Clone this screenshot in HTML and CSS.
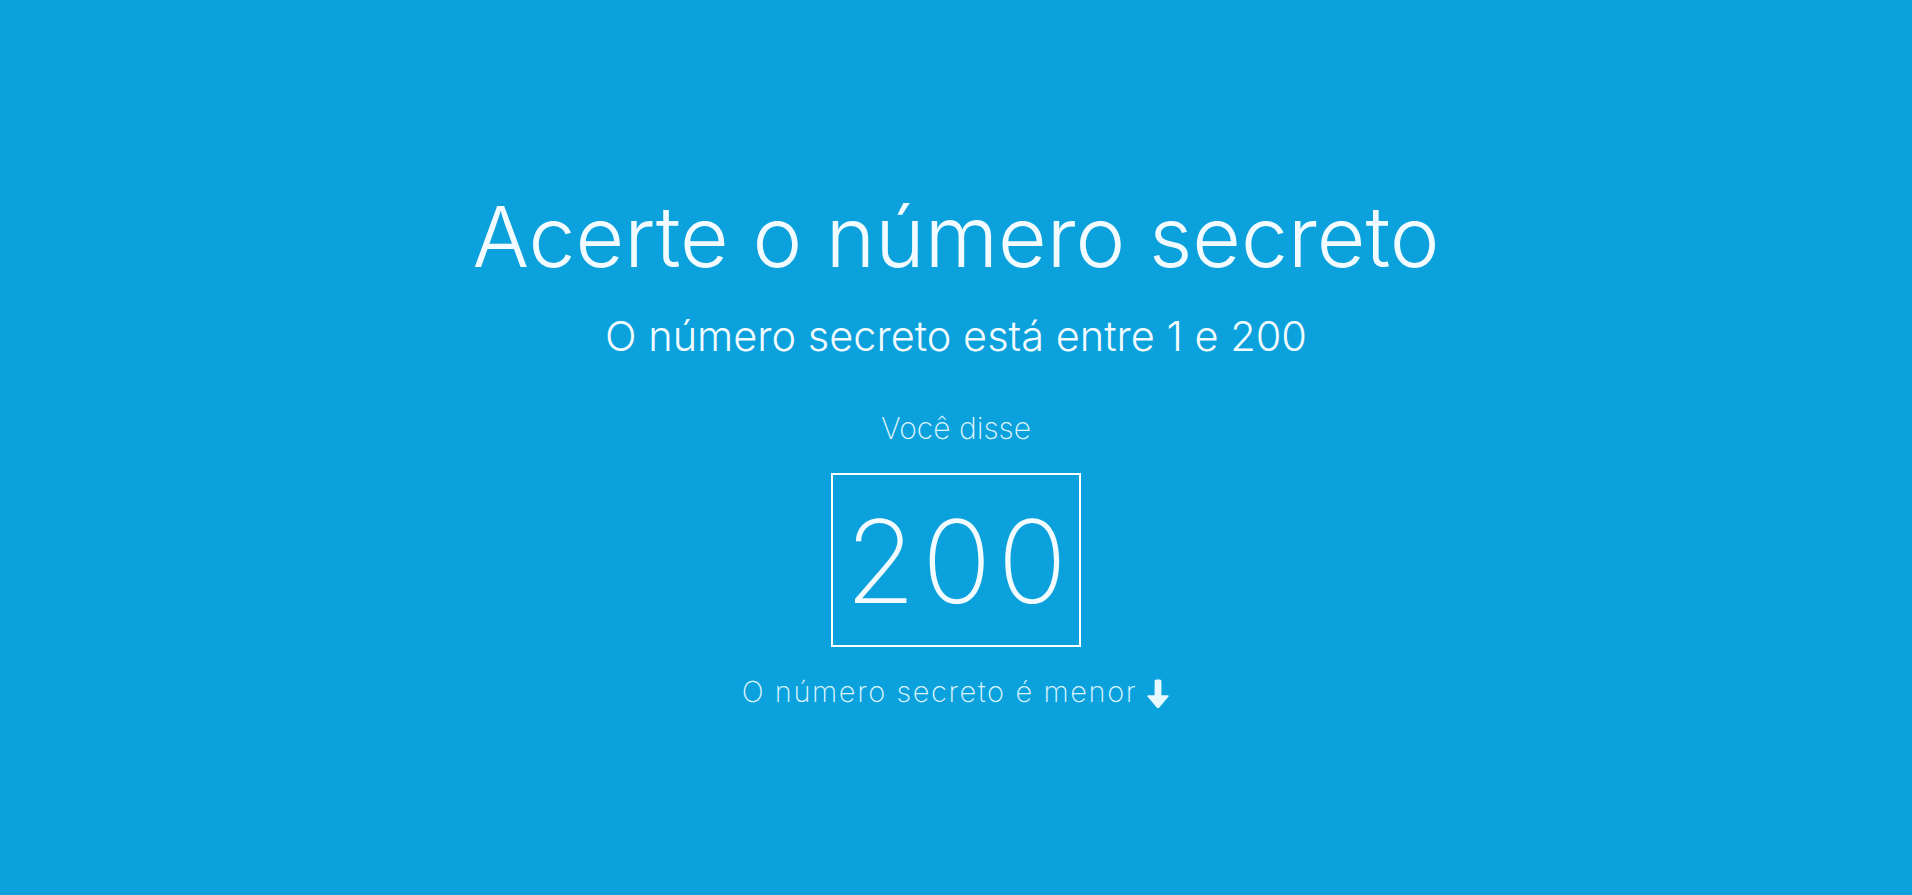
FILE: index.html
```html
<!DOCTYPE html>
<html lang="pt-BR">
<head>
<meta charset="utf-8">
<title>Jogo do número secreto</title>
<link rel="stylesheet" href="styles.css">
</head>
<body>
<main class="game">
  <h1 class="title">Acerte o número secreto</h1>
  <h3 class="subtitle">O número secreto está entre 1 e 200</h3>
  <div class="said">Você disse</div>
  <div class="guess">200</div>
  <div class="hint"><span class="hint-text">O número secreto é menor</span><svg class="arrow" viewBox="0 0 24 30" aria-hidden="true"><path d="M8.6 2.2Q8.6 0.6 10.2 0.6H13.8Q15.4 0.6 15.4 2.2V16.2H21.6Q23.6 16.2 22.4 17.7L13.3 28.6Q12 30 10.7 28.6L1.6 17.7Q0.4 16.2 2.4 16.2H8.6Z"/></svg></div>
</main>
</body>
</html>
```
FILE: styles.css
```css
html, body {
  margin: 0;
  height: 100%;
}
body {
  background: #0ba1dc;
  color: #f2fbff;
  font-family: "Inter", "Noto Sans", sans-serif;
}
.game {
  display: flex;
  flex-direction: column;
  align-items: center;
  padding-top: 195px;
  text-align: center;
}
.title {
  margin: 0;
  font-size: 84px;
  line-height: 1;
  font-weight: 300;
}
.subtitle {
  margin: 37px 0 0;
  font-size: 41.5px;
  line-height: 1;
  font-weight: 300;
}
.said {
  margin-top: 55px;
  font-size: 30px;
  line-height: 1;
  font-weight: 200;
  color: #dff5ff;
}
.guess {
  margin-top: 30px;
  box-sizing: border-box;
  width: 250px;
  height: 174px;
  border: 2px solid #ffffff;
  padding-top: 29px;
  padding-left: 6px;
  font-size: 115px;
  line-height: 1;
  font-weight: 150;
  letter-spacing: 6px;
}
.hint {
  margin-top: 30px;
  display: flex;
  align-items: flex-end;
  color: #dff5ff;
}
.hint-text {
  font-size: 29px;
  line-height: 1;
  font-weight: 200;
  letter-spacing: 1.6px;
}
.arrow {
  width: 24px;
  height: 30px;
  fill: #e8f9ff;
  margin-left: 9px;
  margin-bottom: -3px;
}
```
